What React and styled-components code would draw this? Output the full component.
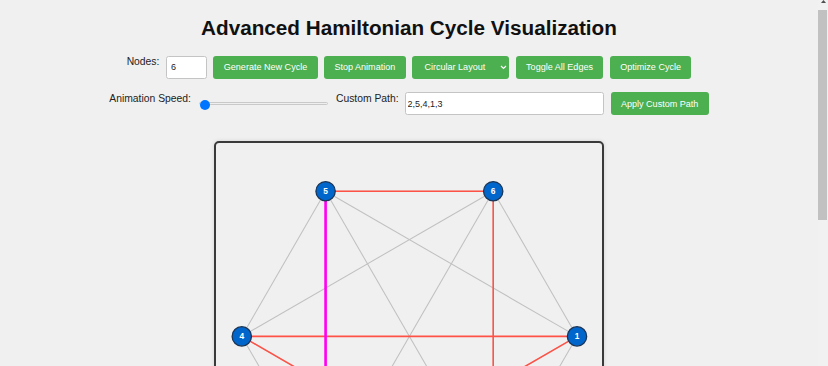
import styled, { createGlobalStyle } from "styled-components";

const GlobalStyle = createGlobalStyle`
  html, body {
    margin: 0;
    padding: 0;
    overflow: hidden;
    background: #f0f0f0;
    font-family: "Liberation Sans", Arial, sans-serif;
    color: #333;
  }
`;

const Page = styled.div`
  display: flex;
  height: 100vh;
`;

const Main = styled.main`
  flex: 1;
  display: flex;
  flex-direction: column;
  align-items: center;
  padding-top: 16px;
  overflow: hidden;
  > * {
    flex-shrink: 0;
  }
`;

const Title = styled.h1`
  margin: 0 0 15.5px;
  font-size: 20.7px;
  font-weight: bold;
  color: #111;
  line-height: normal;
`;

const ControlRow = styled.div`
  display: flex;
  justify-content: center;
  gap: 6.5px;
  height: ${(p) => p.$height}px;
  margin-bottom: ${(p) => p.$gap}px;
`;

const Label = styled.label`
  font-size: 10.35px;
  line-height: normal;
  padding-top: 0.5px;
  color: #222;
  white-space: nowrap;
`;

const TextInput = styled.input`
  box-sizing: border-box;
  width: ${(p) => p.$width}px;
  height: 100%;
  padding: 0 ${(p) => p.$pad}px;
  border: 1px solid #c4c4c4;
  border-radius: 2.5px;
  background: #fff;
  font-family: inherit;
  font-size: 9px;
  color: #222;
  outline: none;
`;

const Button = styled.button`
  box-sizing: border-box;
  height: 100%;
  padding: 0 10.35px;
  border: none;
  border-radius: 3px;
  background: #4caf50;
  color: #fff;
  font-family: inherit;
  font-size: 9.06px;
  white-space: nowrap;
  cursor: pointer;
`;

const LayoutSelect = styled.div`
  box-sizing: border-box;
  height: 100%;
  display: flex;
  align-items: center;
  gap: 15px;
  padding: 0 2px 0 12.3px;
  border-radius: 3px;
  background: #4caf50;
  color: #fff;
  font-size: 9.06px;
  white-space: nowrap;
  svg {
    display: block;
  }
`;

const SpeedSlider = styled.input`
  -webkit-appearance: none;
  appearance: none;
  align-self: center;
  width: 129px;
  height: 10px;
  margin: 0 1.5px;
  background: transparent;

  &::-webkit-slider-runnable-track {
    height: 3px;
    border: 1px solid #c9c9c9;
    border-radius: 3px;
    background: #efefef;
  }
  &::-webkit-slider-thumb {
    -webkit-appearance: none;
    width: 10px;
    height: 10px;
    margin-top: -3.5px;
    border-radius: 50%;
    background: #0075ff;
  }
`;

const GraphFrame = styled.div`
  width: 386.8px;
  height: 386.8px;
  border: 2px solid #3a3a3a;
  border-radius: 5px;
  background: #f0f0f0;
  box-shadow: 0 0 4px rgba(0, 0, 0, 0.12);
  svg {
    display: block;
    width: 100%;
    height: 100%;
  }
`;

const Scrollbar = styled.aside`
  width: 10px;
  flex-shrink: 0;
  display: flex;
  flex-direction: column;
  background: #f1f1f1;
`;

const ScrollArrow = styled.div`
  height: 10px;
  display: flex;
  justify-content: center;
  svg {
    display: block;
  }
`;

const ScrollThumb = styled.div`
  height: 210px;
  margin-right: 1px;
  background: #c1c1c1;
`;

const N = 6;
const CENTER = 300;
const RADIUS = 260;
const nodes = Array.from({ length: N }, (_, i) => {
  const a = (i * 2 * Math.PI) / N;
  return { id: i + 1, x: CENTER + RADIUS * Math.cos(a), y: CENTER + RADIUS * Math.sin(a) };
});

const cycle = [5, 6, 2, 4, 1, 3];
const currentEdge = [3, 5];

function pos(id) {
  return nodes[id - 1];
}

function GraphCanvas() {
  const allEdges = [];
  for (let i = 1; i <= N; i++) {
    for (let j = i + 1; j <= N; j++) allEdges.push([i, j]);
  }
  const cycleEdges = cycle.map((n, i) => [n, cycle[(i + 1) % cycle.length]]);

  return (
    <svg viewBox="0 0 600 600">
      {allEdges.map(([a, b]) => (
        <line
          key={`e${a}-${b}`}
          x1={pos(a).x}
          y1={pos(a).y}
          x2={pos(b).x}
          y2={pos(b).y}
          stroke="#c0c0c0"
          strokeWidth="1.6"
        />
      ))}
      {cycleEdges.map(([a, b]) => (
        <line
          key={`c${a}-${b}`}
          x1={pos(a).x}
          y1={pos(a).y}
          x2={pos(b).x}
          y2={pos(b).y}
          stroke="#ff5247"
          strokeWidth="2.4"
        />
      ))}
      <line
        x1={pos(currentEdge[0]).x}
        y1={pos(currentEdge[0]).y}
        x2={pos(currentEdge[1]).x}
        y2={pos(currentEdge[1]).y}
        stroke="#ff00ff"
        strokeWidth="4"
      />
      {nodes.map((n) => (
        <g key={n.id}>
          <circle cx={n.x} cy={n.y} r="15" fill="#0066cc" stroke="#1b3556" strokeWidth="2" />
          <text
            x={n.x}
            y={n.y + 4.5}
            textAnchor="middle"
            fill="#fff"
            fontSize="13"
            fontWeight="bold"
            fontFamily="Liberation Sans, Arial, sans-serif"
          >
            {n.id}
          </text>
        </g>
      ))}
    </svg>
  );
}

export default function App() {
  return (
    <Page>
      <GlobalStyle />
      <Main>
        <Title>Advanced Hamiltonian Cycle Visualization</Title>
        <ControlRow $height={23.5} $gap={13}>
          <Label>Nodes:</Label>
          <TextInput $width={41} $pad={4} type="number" defaultValue="6" />
          <Button>Generate New Cycle</Button>
          <Button>Stop Animation</Button>
          <LayoutSelect>
            <span>Circular Layout</span>
            <svg width="7" height="5" viewBox="0 0 7 5">
              <path d="M1 1 L3.5 3.5 L6 1" fill="none" stroke="#fff" strokeWidth="1.2" />
            </svg>
          </LayoutSelect>
          <Button>Toggle All Edges</Button>
          <Button>Optimize Cycle</Button>
        </ControlRow>
        <ControlRow $height={23.3} $gap={26}>
          <Label>Animation Speed:</Label>
          <SpeedSlider type="range" min="1" max="10" defaultValue="1" />
          <Label>Custom Path:</Label>
          <TextInput $width={199} $pad={1.5} type="text" defaultValue="2,5,4,1,3" />
          <Button>Apply Custom Path</Button>
        </ControlRow>
        <GraphFrame>
          <GraphCanvas />
        </GraphFrame>
      </Main>
      <Scrollbar>
        <ScrollArrow>
          <svg width="5" height="3" viewBox="0 0 5 3">
            <path d="M0 3 L2.5 0 L5 3 Z" fill="#505050" />
          </svg>
        </ScrollArrow>
        <ScrollThumb />
      </Scrollbar>
    </Page>
  );
}
